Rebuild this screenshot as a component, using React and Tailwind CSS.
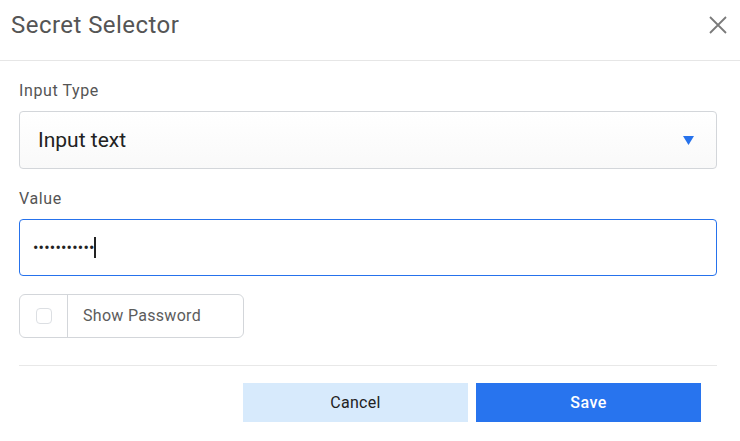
export default function App() {
    return (
        <div className="h-[441px] w-[740px] overflow-hidden bg-white font-['Roboto',sans-serif]">
            {/* Header */}
            <div className="flex h-[61px] items-center justify-between border-b border-[#e6e6e6] pb-[11px] pl-[11px] pr-[13px]">
                <h1 className="text-[24px] font-normal tracking-[0.45px] text-[#555555]">
                    Secret Selector
                </h1>
                <button type="button" className="text-[#7a7a7a]">
                    <svg width="18" height="18" viewBox="0 0 18 18" fill="none">
                        <path
                            d="M1 1L17 17M17 1L1 17"
                            stroke="currentColor"
                            strokeWidth="1.8"
                        />
                    </svg>
                </button>
            </div>

            <div className="pl-[19px] pr-[23px]">
                {/* Input Type */}
                <label className="mt-[20px] block text-[16px] leading-[20px] tracking-[0.6px] text-[#555555]">
                    Input Type
                </label>
                <div className="mt-[10px] flex h-[58px] items-center justify-between rounded-[4px] border border-[#d3d6da] bg-gradient-to-b from-white to-[#f9f9f9] pl-[18px] pr-[22px]">
                    <span className="mt-[1px] text-[21px] text-[#222222]">
                        Input text
                    </span>
                    <svg width="11" height="9" viewBox="0 0 11 9">
                        <path d="M0 0H11L5.5 9Z" fill="#2672ec" />
                    </svg>
                </div>

                {/* Value */}
                <label className="mt-[20px] block text-[16px] leading-[20px] tracking-[0.6px] text-[#555555]">
                    Value
                </label>
                <div className="mt-[10px] flex h-[57px] items-center rounded-[4px] border border-[#2672ec] pl-[13px]">
                    <span className="text-[16px] tracking-[0.2px] text-[#222222]">
                        •••••••••••
                    </span>
                    <span className="ml-[-1px] h-[21px] w-[2px] bg-[#222222]" />
                </div>

                {/* Show password */}
                <div className="mt-[18px] flex h-[44px] w-[225px] overflow-hidden rounded-[6px] border border-[#d3d6da]">
                    <div className="flex w-[48px] items-center justify-center border-r border-[#d3d6da]">
                        <span className="h-[16px] w-[16px] rounded-[4px] border border-[#dcdfe3] bg-white" />
                    </div>
                    <span className="flex items-center pl-[15px] text-[16px] tracking-[0.3px] text-[#5c5c5c]">
                        Show Password
                    </span>
                </div>

                {/* Footer */}
                <div className="mt-[27px] border-t border-[#e8e8e8]" />
                <div className="mt-[17px] flex justify-end gap-[8px] pr-[16px]">
                    <button
                        type="button"
                        className="h-[39px] w-[225px] bg-[#d7eafc] text-[16px] tracking-[0.3px] text-[#222222]"
                    >
                        Cancel
                    </button>
                    <button
                        type="button"
                        className="h-[39px] w-[225px] bg-[#2874ee] text-[16px] font-medium tracking-[0.5px] text-white"
                    >
                        Save
                    </button>
                </div>
            </div>
        </div>
    );
}
